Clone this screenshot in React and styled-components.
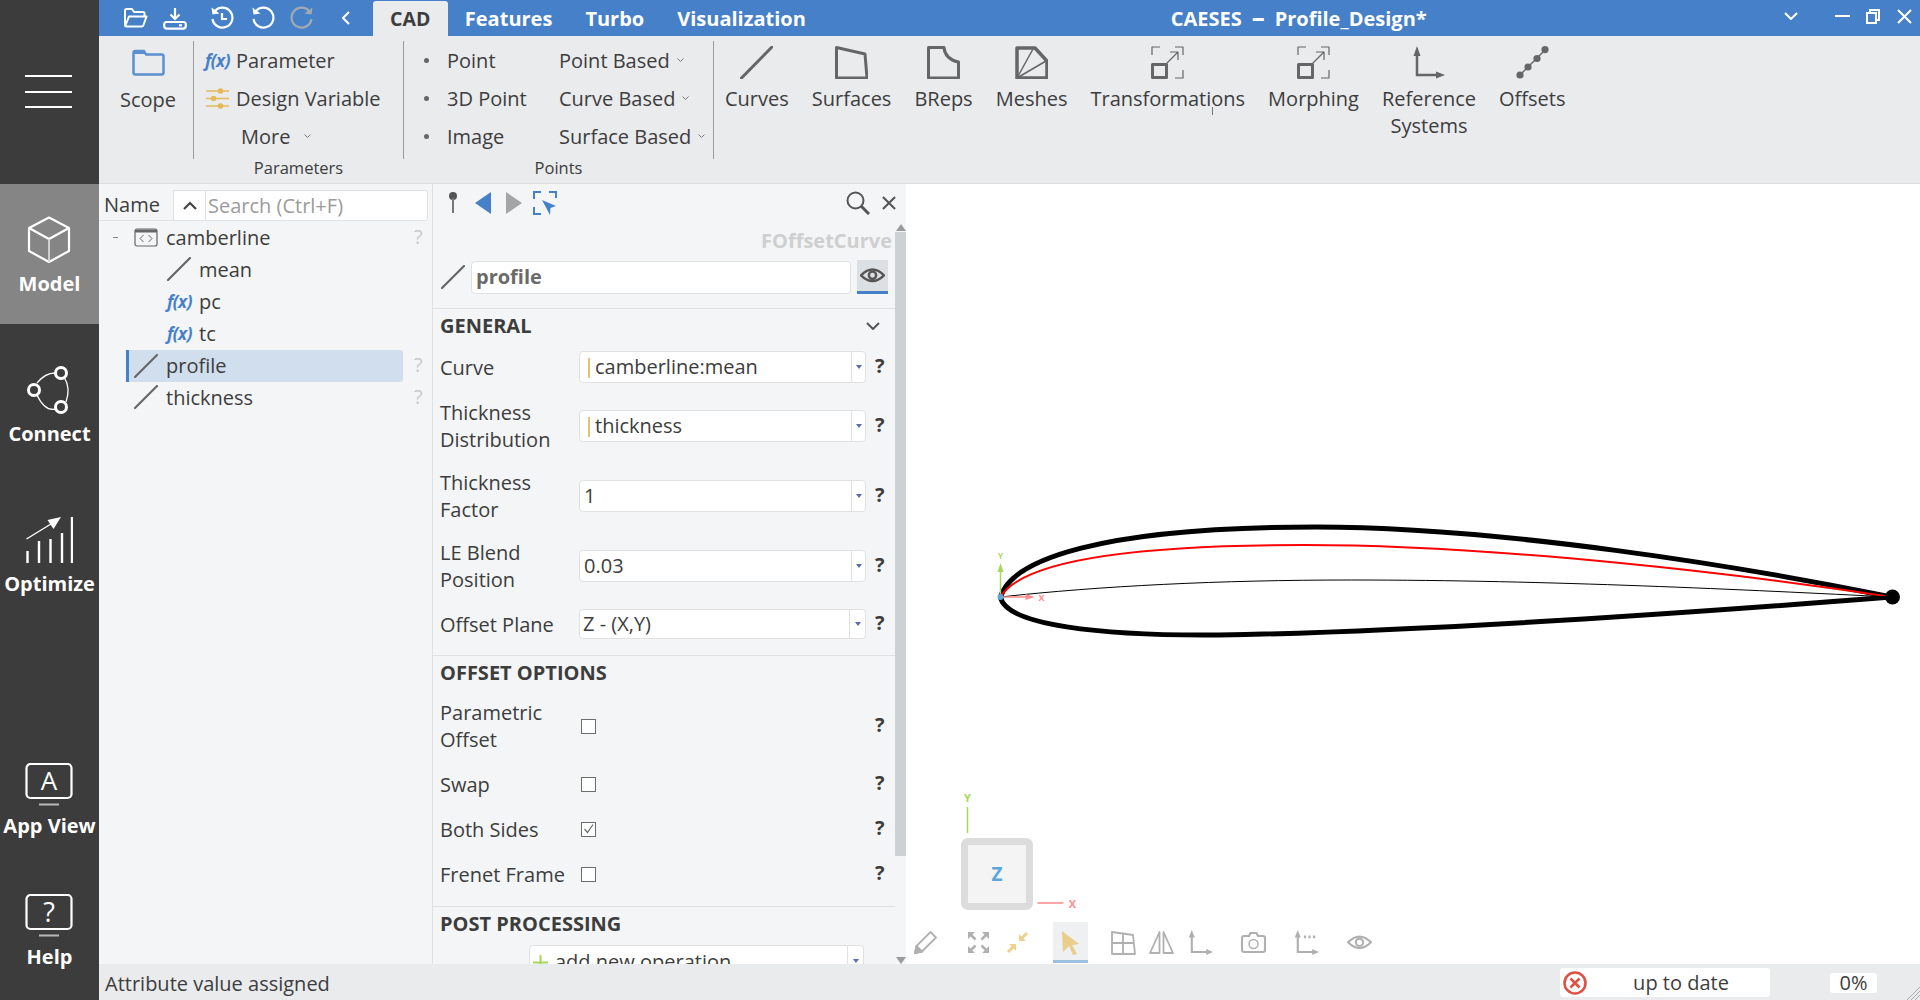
import React from "react";
import styled, { createGlobalStyle } from "styled-components";

const GlobalStyle = createGlobalStyle`
  html, body {
    margin: 0;
    height: 100%;
    overflow: hidden;
  }
  body {
    font-family: "Open Sans", "Noto Sans", sans-serif;
    font-size: 20px;
    line-height: 27px;
    color: #3d3d3d;
  }
  #root {
    height: 100%;
  }
`;

const BLUE = "#4680c8";
const ICON_GRAY = "#666666";

const Shell = styled.div`
  display: flex;
  width: 1920px;
  height: 1000px;
`;

/* ---------- left navigation ---------- */

const Sidebar = styled.nav`
  display: flex;
  flex-direction: column;
  flex: 0 0 99px;
  background: #3c3c3c;
  color: #fff;
`;

const Burger = styled.div`
  height: 184px;
  flex: 0 0 184px;
  box-sizing: border-box;
  padding: 75px 0 0 25px;
  span {
    display: block;
    width: 47px;
    height: 2px;
    margin-bottom: 13.5px;
    background: #fff;
  }
`;

const NavItem = styled.div`
  display: flex;
  flex-direction: column;
  align-items: center;
  height: ${(p) => p.$height || 140}px;
  flex: none;
  margin-bottom: ${(p) => (p.$compact ? 0 : 10)}px;
  padding-top: ${(p) => (p.$compact ? 0 : 32)}px;
  box-sizing: border-box;
  background: ${(p) => (p.$active ? "#858585" : "transparent")};
  font-size: 20px;
  font-weight: 700;
  white-space: nowrap;
`;

const NavIconBox = styled.div`
  height: ${(p) => (p.$compact ? 47 : 48)}px;
  margin-bottom: ${(p) => (p.$compact ? 2 : 6)}px;
  margin-right: 1px;
`;

const NavSpacer = styled.div`
  flex: 1;
`;

const NavBottom = styled.div`
  padding-bottom: 31px;
`;

/* ---------- main column ---------- */

const Main = styled.div`
  display: flex;
  flex-direction: column;
  flex: 1;
  min-width: 0;
`;

const TitleBar = styled.header`
  display: flex;
  align-items: stretch;
  height: 36px;
  flex: none;
  padding-left: 24px;
  background: ${BLUE};
  color: #fff;
`;

const QuickButton = styled.div`
  display: flex;
  align-items: center;
  margin-left: ${(p) => p.$gap || 0}px;
  svg {
    display: block;
  }
`;

const Tab = styled.div`
  display: flex;
  align-items: center;
  height: ${(p) => (p.$active ? 35 : 36)}px;
  margin-top: ${(p) => (p.$active ? 1 : 0)}px;
  padding: ${(p) => (p.$active ? "0 18px 0 17px" : "0 16.5px")};
  font-size: ${(p) => (p.$active ? 19.5 : 20)}px;
  font-weight: 700;
  color: ${(p) => (p.$active ? "#3d3d3d" : "#fff")};
  background: ${(p) => (p.$active ? "#e9ebed" : "transparent")};
  border-radius: 3px 3px 0 0;
`;

const WindowTitle = styled.div`
  flex: 1;
  align-self: center;
  font-weight: 700;
  text-align: center;
  white-space: pre;
  padding-right: 1px;
`;

const TitleDash = styled.span`
  display: inline-block;
  margin: 0 10px;
  font-size: 26px;
  line-height: 20px;
  vertical-align: -1px;
`;

const WindowControls = styled.div`
  display: flex;
  align-items: center;
  flex: 0 0 136px;
  padding-left: 8px;
  padding-bottom: 4px;
`;

const WindowControl = styled.div`
  display: flex;
  margin-left: ${(p) => p.$gap || 0}px;
`;

const Ribbon = styled.div`
  display: flex;
  align-items: flex-start;
  height: 148px;
  flex: none;
  padding-top: 5px;
  box-sizing: border-box;
  background: #e9ebed;
  border-bottom: 1px solid #dcdee0;
`;

const RibbonGroup = styled.div`
  display: flex;
  flex-direction: column;
  width: ${(p) => p.$width}px;
  flex: none;
`;

const GroupBody = styled.div`
  display: flex;
  height: 118px;
  box-sizing: border-box;
`;

const GroupCaption = styled.div`
  height: 18px;
  padding-left: ${(p) => p.$left || 0}px;
  font-size: 16.5px;
  line-height: 18px;
  text-align: center;
`;

const Separator = styled.div`
  flex: none;
  width: 1px;
  height: 118px;
  background: #9a9c9e;
`;

const ScopeButton = styled.div`
  display: flex;
  flex-direction: column;
  align-items: center;
  width: 94px;
  flex: none;
  box-sizing: border-box;
  padding: 8px 0 0 4px;
  svg {
    display: block;
    margin-bottom: 9.5px;
  }
`;

const CommandColumn = styled.div`
  display: flex;
  flex-direction: column;
  padding-left: ${(p) => p.$left}px;
  width: ${(p) => p.$width}px;
  box-sizing: border-box;
  flex: none;
`;

const CommandRow = styled.div`
  display: flex;
  align-items: center;
  height: 38px;
  white-space: nowrap;
  padding-left: ${(p) => p.$indent || 0}px;
`;

const CommandIcon = styled.span`
  display: flex;
  align-items: center;
  width: 31px;
  flex: none;
`;

const Bullet = styled.span`
  width: 5px;
  height: 5px;
  margin-right: 18px;
  border-radius: 50%;
  background: #666;
  flex: none;
`;

const FxMark = styled.span`
  font-size: ${(p) => p.$size || 17}px;
  font-weight: 700;
  font-style: italic;
  color: ${BLUE};
  letter-spacing: -0.5px;
  font-family: "Open Sans", sans-serif;
`;

const SmallChevron = styled.svg`
  margin-left: ${(p) => p.$gap || 8}px;
  flex: none;
`;

const BigButtons = styled.div`
  display: flex;
  gap: 23px;
  padding-left: 11px;
`;

const BigButton = styled.div`
  display: flex;
  flex-direction: column;
  align-items: center;
  position: relative;
  padding-top: 5px;
  text-align: center;
  svg {
    display: block;
    margin-bottom: 5.5px;
  }
`;

const BigLabel = styled.span`
  white-space: pre-line;
`;

const CursorTick = styled.span`
  position: absolute;
  left: 122px;
  top: 66px;
  width: 1px;
  height: 8px;
  background: #777;
`;

const Body = styled.div`
  display: flex;
  flex: 1;
  min-height: 0;
`;

/* ---------- tree ---------- */

const TreePanel = styled.aside`
  flex: 0 0 334px;
  box-sizing: border-box;
  background: #f3f5f7;
  border-right: 1px solid #dfe1e3;
`;

const TreeHeader = styled.div`
  display: flex;
  align-items: stretch;
  height: 31px;
  margin: 6px 4px 0 0;
`;

const NameHeading = styled.div`
  flex: 0 0 74px;
  box-sizing: border-box;
  padding-left: 5px;
  line-height: 29px;
  border-bottom: 1px solid #dfe1e3;
`;

const SortButton = styled.div`
  display: flex;
  align-items: center;
  justify-content: center;
  flex: 0 0 32px;
  box-sizing: border-box;
  background: #fff;
  border: 1px solid #dfe1e3;
  border-right: 0;
`;

const SearchBox = styled.div`
  flex: 1;
  box-sizing: border-box;
  padding-left: 2px;
  line-height: 29px;
  color: #9b9b9b;
  background: #fff;
  border: 1px solid #dfe1e3;
  border-radius: 0 3px 3px 0;
`;

const TreeList = styled.div`
  display: flex;
  flex-direction: column;
  padding-top: 1px;
`;

const TreeRow = styled.div`
  display: flex;
  align-items: center;
  height: 32px;
  width: 277px;
  margin-left: 27px;
  box-sizing: border-box;
  padding: 0 0 ${(p) => (p.$selected ? 1 : 2)}px ${(p) => 5 + (p.$level ? 33 : 0)}px;
  position: relative;
  border-left: 3px solid ${(p) => (p.$selected ? BLUE : "transparent")};
  border-radius: 0 3px 3px 0;
  background: ${(p) => (p.$selected ? "#d0deee" : "transparent")};
`;

const TreeIcon = styled.span`
  display: flex;
  align-items: center;
  width: 32px;
  flex: none;
`;

const TreeToggle = styled.span`
  position: absolute;
  left: -16px;
  top: 15px;
  width: 5px;
  height: 1px;
  background: #8a8a8a;
`;

const TreeHelp = styled.span`
  position: absolute;
  left: 285px;
  top: 1px;
  color: #c9c9c9;
`;

/* ---------- properties ---------- */

const PropPanel = styled.section`
  display: flex;
  flex-direction: column;
  flex: 0 0 473px;
  background: #f3f5f7;
  min-height: 0;
`;

const PropToolbar = styled.div`
  display: flex;
  align-items: center;
  height: 40px;
  flex: none;
  padding: 0 10px 3px 15px;
  box-sizing: border-box;
`;

const ToolSlot = styled.span`
  display: flex;
  margin-left: ${(p) => p.$gap || 0}px;
`;

const ToolSpacer = styled.span`
  flex: 1;
`;

const PropScroll = styled.div`
  display: flex;
  flex: 1;
  min-height: 0;
`;

const Form = styled.div`
  flex: 1;
  min-width: 0;
  overflow: hidden;
`;

const TypeLabel = styled.div`
  height: 27px;
  margin-top: 3px;
  padding-right: 3px;
  text-align: right;
  font-weight: 700;
  color: #cfcfcf;
`;

const NameRow = styled.div`
  display: flex;
  align-items: center;
  height: 34px;
  margin-top: 6px;
  padding-left: 8px;
`;

const NameInput = styled.div`
  width: 380px;
  height: 33px;
  box-sizing: border-box;
  margin: 0 6px;
  padding-left: 4px;
  line-height: 29px;
  font-weight: 700;
  color: #6a6a6a;
  background: #fff;
  border: 1px solid #dfe1e3;
  border-radius: 4px;
`;

const EyeToggle = styled.div`
  display: flex;
  align-items: center;
  justify-content: center;
  width: 31px;
  height: 34px;
  box-sizing: border-box;
  background: #dde0e3;
  border-bottom: 3px solid ${BLUE};
`;

const FormSection = styled.div`
  margin-top: ${(p) => p.$top}px;
  padding: 3px 0 ${(p) => p.$bottom}px 7px;
  border-top: 1px solid #dfe1e3;
`;

const SectionHead = styled.div`
  display: flex;
  align-items: center;
  justify-content: space-between;
  height: 27px;
  padding-right: 15px;
  font-weight: 700;
`;

const RowList = styled.div`
  display: flex;
  flex-direction: column;
  gap: ${(p) => p.$gap}px;
  margin-top: ${(p) => p.$top}px;
`;

const FieldRow = styled.div`
  display: grid;
  grid-template-columns: 139px 287px 1fr;
  align-items: center;
`;

const FieldLabel = styled.div`
  white-space: pre-line;
`;

const FieldBox = styled.div`
  display: flex;
  width: ${(p) => p.$width || 287}px;
  height: ${(p) => p.$height || 32}px;
  margin-left: ${(p) => p.$left || 0}px;
  flex: none;
  box-sizing: border-box;
  background: #fff;
  border: 1px solid #dfe1e3;
  border-radius: 4px;
`;

const FieldValue = styled.div`
  flex: 1;
  padding-left: ${(p) => p.$pad}px;
  line-height: ${(p) => p.$line || 30}px;
  white-space: nowrap;
  ${(p) =>
    p.$formula &&
    `
    position: relative;
    &::before {
      content: "";
      position: absolute;
      left: 8px;
      top: 6px;
      width: 1.5px;
      height: 20px;
      background: #e6c173;
    }
  `}
`;

const FieldDrop = styled.div`
  display: flex;
  align-items: center;
  justify-content: center;
  width: ${(p) => p.$width || 13}px;
  flex: none;
  border-left: 1px solid #dfe1e3;
`;

const Caret = styled.span`
  width: 0;
  height: 0;
  border-left: 3.5px solid transparent;
  border-right: 3.5px solid transparent;
  border-top: 4px solid #5c6bb0;
`;

const HelpMark = styled.div`
  padding-left: 9px;
  margin-bottom: 3px;
  font-weight: 700;
  line-height: 24px;
`;

const CheckBox = styled.div`
  display: flex;
  align-items: center;
  justify-content: center;
  width: 15px;
  height: 15px;
  margin-left: 2px;
  box-sizing: border-box;
  background: #fff;
  border: 1.5px solid #6c6c6c;
  svg {
    display: block;
  }
`;

const AddOperation = styled.div`
  display: flex;
  align-items: center;
`;

const AddLabel = styled.div`
  flex: 1;
  display: flex;
  align-items: center;
  line-height: 30px;
  padding: 2px 0 0 3px;
  svg {
    margin-right: 7px;
  }
`;

const ScrollBar = styled.div`
  display: flex;
  flex-direction: column;
  align-items: center;
  flex: 0 0 11px;
`;

const ScrollArrow = styled.span`
  width: 0;
  height: 0;
  margin-top: ${(p) => (p.$up ? 0 : "auto")};
  border-left: 5px solid transparent;
  border-right: 5px solid transparent;
  ${(p) => (p.$up ? "border-bottom" : "border-top")}: 7px solid #9b9b9b;
`;

const ScrollThumb = styled.div`
  align-self: stretch;
  height: 624px;
  margin-top: 1px;
  background: #ccd1d6;
`;

/* ---------- 3d viewport ---------- */

const Viewport = styled.div`
  position: relative;
  flex: 1;
  min-width: 0;
  background: #fff;
  overflow: hidden;
`;

const SceneSvg = styled.svg`
  position: absolute;
  inset: 0;
  width: 100%;
  height: 100%;
`;

const ViewCube = styled.div`
  position: absolute;
  left: 55px;
  top: 654px;
  display: flex;
  align-items: center;
  justify-content: center;
  width: 72px;
  height: 72px;
  box-sizing: border-box;
  border: 7px solid #dcdcdc;
  border-radius: 7px;
  background: #f4f4f4;
  color: #5ba7d9;
  font-weight: 700;
  font-size: 19px;
`;

const ViewTools = styled.div`
  position: absolute;
  left: 2px;
  bottom: 1px;
  display: flex;
`;

const ViewTool = styled.div`
  display: flex;
  align-items: center;
  justify-content: center;
  width: 35px;
  height: 41px;
  box-sizing: border-box;
  padding-top: 2px;
  margin-left: ${(p) => (p.$near ? 3.5 : p.$first ? 0 : 18)}px;
  background: ${(p) => (p.$active ? "#eef0f1" : "transparent")};
  border-bottom: 3px solid ${(p) => (p.$active ? "#9cbfe2" : "transparent")};
`;

/* ---------- status ---------- */

const StatusBar = styled.footer`
  display: flex;
  align-items: center;
  position: relative;
  height: 36px;
  flex: none;
  padding-left: 6px;
  background: #e9ebed;
`;

const StatusMessage = styled.div`
  flex: 1;
  padding-top: 2px;
`;

const StateBox = styled.div`
  display: flex;
  align-items: center;
  width: 210px;
  height: 29px;
  margin-top: 1px;
  box-sizing: border-box;
  padding-left: 3px;
  background: #fff;
  border-radius: 3px;
  svg {
    flex: none;
  }
`;

const StateText = styled.div`
  flex: 1;
  text-align: center;
  padding-left: 5px;
  line-height: 27px;
`;

const ProgressBox = styled.div`
  width: 47px;
  height: 20px;
  margin: 1px 43px 0 60px;
  line-height: 20px;
  text-align: center;
  background: #fff;
  border-radius: 3px;
`;

const ResizeGrip = styled.svg`
  position: absolute;
  right: 0;
  bottom: 0;
`;

/* ---------- icons ---------- */

const LineIcon = ({ size = 24 }) => (
  <svg width={size} height={size} viewBox="0 0 24 24">
    <path d="M1 23 23 1" stroke={ICON_GRAY} strokeWidth="2.2" strokeLinecap="round" fill="none" />
  </svg>
);

const CloseIcon = ({ size = 15, color = "#fff", stroke = 2 }) => (
  <svg width={size} height={size} viewBox="0 0 15 15" fill="none" stroke={color} strokeWidth={stroke}>
    <path d="M1 1 14 14M14 1 1 14" />
  </svg>
);

const FolderOpenIcon = () => (
  <svg width="25" height="22" viewBox="0 0 25 22" fill="none" stroke="#fff" strokeWidth="2" strokeLinejoin="round">
    <path d="M2 18V3.500Q2 2 3.500 2H9l2 3h9q1.500 0 1.500 1.500V9" />
    <path d="M2 19.500 6 9.500H23.500L20.500 18q-.5 1.500-2 1.500H3.500Q2 19.500 2 18" />
  </svg>
);

const SaveIcon = () => (
  <svg width="24" height="23" viewBox="0 0 24 23" fill="none" stroke="#fff" strokeWidth="2.2">
    <path d="M12 1V11M7.500 7.500 12 12 16.500 7.500" />
    <rect x="1.200" y="15" width="21.600" height="6.600" rx="2.500" />
    <path d="M16 18.300h3" />
  </svg>
);

const HistoryIcon = () => (
  <svg width="24" height="24" viewBox="0 0 24 24" fill="none" stroke="#fff" strokeWidth="2.2">
    <path d="M4.500 5.500A10 10 0 1 1 2.500 13" />
    <path d="M1.500 1.500 2.500 8.500 9.500 7.500Z" fill="#fff" stroke="none" />
    <path d="M12 7V13H17" />
  </svg>
);

const UndoIcon = ({ color = "#fff", flip }) => (
  <svg width="24" height="24" viewBox="0 0 24 24" fill="none" stroke={color} strokeWidth="2.2">
    <g transform={flip ? "matrix(-1 0 0 1 24 0)" : undefined}>
      <path d="M4.500 5.500A10 10 0 1 1 2.500 13" />
      <path d="M1.500 1.500 2.500 8.500 9.500 7.500Z" fill={color} stroke="none" />
    </g>
  </svg>
);

const ChevronIcon = ({ width = 14, height = 8, color = "#fff", stroke = 2 }) => (
  <svg width={width} height={height} viewBox="0 0 14 8" preserveAspectRatio="none" fill="none" stroke={color} strokeWidth={stroke}>
    <path d="M1 1 7 7 13 1" />
  </svg>
);

const ScopeIcon = () => (
  <svg width="33" height="27" viewBox="0 0 33 27" fill="none" stroke="#5b8fd0" strokeWidth="2.500" strokeLinejoin="round">
    <path d="M1.500 4V23.500Q1.500 25.500 3.500 25.500H29.500Q31.500 25.500 31.500 23.500V7.500Q31.500 5.500 29.500 5.500H14L12 2H3.500Q1.500 2 1.500 4Z" />
    <path d="M2 2.500H12L13.500 5H2Z" fill="#5b8fd0" stroke="none" />
  </svg>
);

const SliderIcon = () => (
  <svg width="25" height="25" viewBox="0 0 25 25" stroke="#e5b95a" strokeWidth="1.500" fill="#e5b95a">
    <path d="M1 5H24M1 12.500H24M1 20H24" fill="none" />
    <circle cx="15.500" cy="5" r="2.800" stroke="none" />
    <circle cx="8.500" cy="12.500" r="2.800" stroke="none" />
    <circle cx="15.500" cy="20" r="2.800" stroke="none" />
  </svg>
);

const BigIcon = ({ children }) => (
  <svg width="33" height="33" viewBox="0 0 33 33" fill="none" stroke={ICON_GRAY} strokeLinejoin="round">
    {children}
  </svg>
);

const TransformGlyph = () => (
  <BigIcon>
    <path d="M1 9V1H9M24 1H32V9M32 24V32H24" strokeWidth="1.200" />
    <rect x="1.500" y="18.500" width="14" height="13" strokeWidth="3" />
    <path d="M15 18 27 6M19 6H27V14" strokeWidth="1.200" />
  </BigIcon>
);

const AxesGlyph = ({ color = ICON_GRAY, dots }) => (
  <svg width="33" height="33" viewBox="0 0 33 33" fill="none" stroke={color}>
    <path d="M5 6V29H26" strokeWidth="2.500" />
    <path d="M5 0 1.500 10H8.500ZM33 29 24 25.500V32.500Z" fill={color} stroke="none" />
    {dots && <path d="M13 8h3M18 8h3M23 8h3" strokeWidth="3" />}
  </svg>
);

const ribbonIcons = {
  Curves: (
    <BigIcon>
      <path d="M1.500 32 32 1" strokeWidth="3" strokeLinecap="round" />
    </BigIcon>
  ),
  Surfaces: (
    <BigIcon>
      <path d="M1.500 1.500 30 8 32 32H1.500Z" strokeWidth="3" />
    </BigIcon>
  ),
  BReps: (
    <BigIcon>
      <path d="M1.500 1.500H17Q18 13 31.500 16V32H1.500Z" strokeWidth="3" />
    </BigIcon>
  ),
  Meshes: (
    <BigIcon>
      <path d="M2 2H20L32 15V32H2Z" strokeWidth="3.500" />
      <path d="M2 32 18 3M2 32 31 15" strokeWidth="1.500" />
    </BigIcon>
  ),
  Transformations: <TransformGlyph />,
  Morphing: <TransformGlyph />,
  "Reference\nSystems": <AxesGlyph />,
  Offsets: (
    <BigIcon>
      <path d="M4 29 29 4" strokeWidth="1.500" />
      <g fill={ICON_GRAY} stroke="none">
        <circle cx="4" cy="29" r="3.600" />
        <circle cx="12" cy="21" r="3.600" />
        <circle cx="21" cy="12.500" r="3.600" />
        <circle cx="29" cy="3.600" r="3.600" />
      </g>
    </BigIcon>
  ),
};

const WhiteGlyph = ({ width = 48, height = 48, children }) => (
  <svg width={width} height={height} viewBox={`0 0 ${width} ${height}`} fill="none" stroke="#fff" strokeLinejoin="round">
    {children}
  </svg>
);

const CubeIcon = () => (
  <WhiteGlyph height={48}>
    <path d="M24 1.500 44 12V35L24 46 4 35V12Z" strokeWidth="2.200" />
    <path d="M4 12 24 23 44 12" strokeWidth="2.200" />
    <path d="M24 23V46" strokeWidth="1.800" stroke="#d8d8d8" />
  </WhiteGlyph>
);

const ConnectIcon = () => (
  <WhiteGlyph>
    <path d="M39 11Q46 22 41 36M31 43Q20 46 12 29M12 17Q20 7 30 7" strokeWidth="1.300" />
    <circle cx="36" cy="7" r="5.500" strokeWidth="3" />
    <circle cx="9" cy="24" r="5.500" strokeWidth="3" />
    <circle cx="36" cy="41" r="5.500" strokeWidth="3" />
  </WhiteGlyph>
);

const OptimizeIcon = () => (
  <WhiteGlyph>
    <path d="M1.500 23 30 5.500" strokeWidth="1.400" />
    <path d="M36 1 22.500 4 28.500 13Z" fill="#fff" stroke="none" />
    <path d="M2.500 35V47M14 25V47M25.500 23V47M37 17V47M47 1V47" strokeWidth="2.400" />
  </WhiteGlyph>
);

const ScreenIcon = ({ children }) => (
  <svg width="48" height="47" viewBox="0 0 48 47" fill="none" stroke="#fff">
    <rect x="1.500" y="1" width="45" height="34" rx="4" strokeWidth="2.200" />
    <path d="M14 41.500H34" strokeWidth="2" stroke="#b8b8b8" />
    {children}
  </svg>
);

const PinIcon = () => (
  <svg width="10" height="22" viewBox="0 0 10 22">
    <circle cx="5" cy="4" r="4" fill="#555" />
    <path d="M5 6V21" stroke="#777" strokeWidth="2" />
  </svg>
);

const Triangle = ({ color, right }) => (
  <svg width="16" height="22" viewBox="0 0 16 22">
    <path d={right ? "M0 0 16 11 0 22Z" : "M16 0 0 11 16 22Z"} fill={color} />
  </svg>
);

const SelectFrameIcon = () => (
  <svg width="24" height="24" viewBox="0 0 24 24" fill="none" stroke={BLUE} strokeWidth="2">
    <path d="M1 8V1H8M16 1H23V7M1 16V23H8" />
    <path d="M9 9 23 15 17.500 17 17 24Z" fill={BLUE} stroke="none" />
  </svg>
);

const SearchIcon = () => (
  <svg width="24" height="24" viewBox="0 0 24 24" fill="none" stroke="#555">
    <circle cx="9.500" cy="9.500" r="8" strokeWidth="2" />
    <path d="M15 15 23 23" strokeWidth="3" />
  </svg>
);

const EyeIcon = ({ color = "#555", width = 25, stroke = 2.3 }) => (
  <svg width={width} height={(width * 14) / 24} viewBox="0 0 24 14" fill="none" stroke={color} strokeWidth={stroke}>
    <path d="M1 7Q12 -4 23 7 12 18 1 7Z" />
    <circle cx="12" cy="7" r="3.500" />
  </svg>
);

const ModuleIcon = () => (
  <svg width="24" height="19" viewBox="0 0 24 19" fill="none" stroke="#666">
    <rect x="1" y="1" width="22" height="17" rx="2" strokeWidth="1.200" />
    <path d="M1 3H23" strokeWidth="3" />
    <path d="M9.500 7 6 10.500 9.500 14M14.500 7 18 10.500 14.500 14" strokeWidth="1" />
  </svg>
);

const ToolSvg = ({ color = "#b0b0b0", children, fill = "none" }) => (
  <svg width="25" height="25" viewBox="0 0 25 25" fill={fill} stroke={color} strokeWidth="1.800" strokeLinejoin="round">
    {children}
  </svg>
);

function AxesGlyphSmall({ dots }) {
  return (
    <svg width="25" height="25" viewBox="0 0 33 33" fill="none" stroke="#b0b0b0">
      <path d="M5 6V29H26" strokeWidth="2.800" />
      <path d="M5 0 1 10H9ZM33 29 24 25V33Z" fill="#b0b0b0" stroke="none" />
      {dots && <path d="M13 9h3M19 9h3M25 9h3" strokeWidth="3.500" />}
    </svg>
  );
}

const viewIcons = [
  <ToolSvg>
    <path d="M2 23 3.500 16 17.500 2 23 7.500 9 21.500Z" />
    <path d="M2 23 3.500 16 9 21.500Z" fill="#b0b0b0" />
  </ToolSvg>,
  <ToolSvg>
    <path d="M2 2H9L2 9ZM23 2H16L23 9ZM2 23H9L2 16ZM23 23H16L23 16Z" fill="#b0b0b0" stroke="none" />
    <path d="M4 4 9.500 9.500M21 4 15.500 9.500M4 21 9.500 15.500M21 21 15.500 15.500" strokeWidth="2.500" />
  </ToolSvg>,
  <ToolSvg color="#efd08e">
    <path d="M22 3 15.500 9.500M3 22 9.500 15.500" strokeWidth="3" />
    <path d="M14 4V11H21ZM11 21V14H4Z" fill="#efd08e" stroke="none" />
  </ToolSvg>,
  <ToolSvg color="#e9cd8a">
    <path d="M4 1 21 14 14 15 19 24 15 25 11 16 5 22Z" fill="#e9cd8a" stroke="none" />
  </ToolSvg>,
  <ToolSvg>
    <path d="M1 2 22 5 24 24H1ZM1 13H23M12 4V24" />
  </ToolSvg>,
  <ToolSvg>
    <path d="M10.500 2V23H1ZM14.500 2V23H24Z" />
  </ToolSvg>,
  <AxesGlyphSmall />,
  <ToolSvg>
    <path d="M3 6H8L9.500 3H15.500L17 6H22Q24 6 24 8V20Q24 22 22 22H3Q1 22 1 20V8Q1 6 3 6Z" strokeWidth="2.200" />
    <circle cx="12.500" cy="14" r="4.500" strokeWidth="1.500" />
  </ToolSvg>,
  <AxesGlyphSmall dots />,
  <EyeIcon color="#b0b0b0" width={25} stroke={2} />,
];

const parameterCommands = [
  { icon: <FxMark>f(x)</FxMark>, label: "Parameter" },
  { icon: <SliderIcon />, label: "Design Variable" },
];

const pointCommands = ["Point", "3D Point", "Image"];

const basedCommands = ["Point Based", "Curve Based", "Surface Based"];

const ribbonButtons = [
  "Curves",
  "Surfaces",
  "BReps",
  "Meshes",
  "Transformations",
  "Morphing",
  "Reference\nSystems",
  "Offsets",
];

const treeItems = [
  { name: "camberline", icon: <ModuleIcon />, help: true, toggle: true },
  { name: "mean", icon: <LineIcon />, level: 1 },
  { name: "pc", icon: <FxMark>f(x)</FxMark>, level: 1 },
  { name: "tc", icon: <FxMark>f(x)</FxMark>, level: 1 },
  { name: "profile", icon: <LineIcon />, help: true, selected: true },
  { name: "thickness", icon: <LineIcon />, help: true },
];

const generalFields = [
  { label: "Curve", value: "camberline:mean", formula: true },
  { label: "Thickness\nDistribution", value: "thickness", formula: true },
  { label: "Thickness\nFactor", value: "1" },
  { label: "LE Blend\nPosition", value: "0.03" },
];

const offsetOptions = [
  { label: "Parametric\nOffset" },
  { label: "Swap" },
  { label: "Both Sides", checked: true },
  { label: "Frenet Frame" },
];

const SmallCaretIcon = ({ gap }) => (
  <SmallChevron $gap={gap} width="7" height="5" viewBox="0 0 7 5" fill="none" stroke="#777" strokeWidth="1">
    <path d="M.5 .5 3.500 3.500 6.500 .5" />
  </SmallChevron>
);

const Airfoil = () => (
  <SceneSvg viewBox="907 184 1013 780" fill="none">
    <path d="M1001 597C1006 625 1100 636 1220 635C1400 632 1650 616 1892 597" stroke="#000" strokeWidth="5" />
    <path d="M1001 597C1012 560 1100 527 1316 527C1500 527 1740 566 1892 597" stroke="#000" strokeWidth="5" />
    <path d="M1001 597C1020 565 1110 545 1304 545C1500 545 1750 575 1892 597" stroke="#f00" strokeWidth="2" />
    <path d="M1001 597C1100 586 1220 580 1352 580C1550 580 1750 590 1892 597" stroke="#000" strokeWidth="1" />
    <circle cx="1893" cy="597" r="7.500" fill="#000" />
    <path d="M1001 570V597" stroke="#a6d858" strokeWidth="1.500" />
    <path d="M1001 563 998 572H1004Z" fill="#a6d858" />
    <text x="1001" y="559" fontSize="8" fontWeight="700" textAnchor="middle" fill="#a6d858">Y</text>
    <path d="M1001 597H1028" stroke="#ff8a8a" strokeWidth="1.500" />
    <path d="M1035 597 1026 594V600Z" fill="#ff8a8a" />
    <text x="1042" y="601" fontSize="9" fontWeight="700" textAnchor="middle" fill="#ff8a8a">X</text>
    <circle cx="1001" cy="597" r="3" fill="#5ba7d9" />
    <path d="M968 807V833" stroke="#a6d858" strokeWidth="1.500" />
    <text x="968" y="802" fontSize="11" fontWeight="700" textAnchor="middle" fill="#a6d858">Y</text>
    <path d="M1038 903H1064" stroke="#ff8a8a" strokeWidth="1.500" />
    <text x="1073" y="908" fontSize="11" fontWeight="700" textAnchor="middle" fill="#ff8a8a">X</text>
  </SceneSvg>
);

const App = () => {
  return (
    <Shell>
      <GlobalStyle />
      <Sidebar>
        <Burger>
          <span />
          <span />
          <span />
        </Burger>
        <NavItem $active>
          <NavIconBox>
            <CubeIcon />
          </NavIconBox>
          Model
        </NavItem>
        <NavItem>
          <NavIconBox>
            <ConnectIcon />
          </NavIconBox>
          Connect
        </NavItem>
        <NavItem>
          <NavIconBox>
            <OptimizeIcon />
          </NavIconBox>
          Optimize
        </NavItem>
        <NavSpacer />
        <NavBottom>
          <NavItem $compact $height={131}>
            <NavIconBox $compact>
              <ScreenIcon>
                <text x="24" y="27" fontSize="26" fontWeight="400" fill="#fff" stroke="none" textAnchor="middle">A</text>
              </ScreenIcon>
            </NavIconBox>
            App View
          </NavItem>
          <NavItem $compact $height={75}>
            <NavIconBox $compact>
              <ScreenIcon>
                <text x="24" y="28" fontSize="27" fontWeight="400" fill="#fff" stroke="none" textAnchor="middle">?</text>
              </ScreenIcon>
            </NavIconBox>
            Help
          </NavItem>
        </NavBottom>
      </Sidebar>

      <Main>
        <TitleBar>
          <QuickButton>
            <FolderOpenIcon />
          </QuickButton>
          <QuickButton $gap={15}>
            <SaveIcon />
          </QuickButton>
          <QuickButton $gap={23}>
            <HistoryIcon />
          </QuickButton>
          <QuickButton $gap={17}>
            <UndoIcon />
          </QuickButton>
          <QuickButton $gap={15}>
            <UndoIcon color="#a3a9b0" flip />
          </QuickButton>
          <QuickButton $gap={28}>
            <svg width="8" height="14" viewBox="0 0 8 14" fill="none" stroke="#fff" strokeWidth="2">
              <path d="M7 1 1 7 7 13" />
            </svg>
          </QuickButton>
          <QuickButton $gap={23} />
          <Tab $active>CAD</Tab>
          <Tab>Features</Tab>
          <Tab>Turbo</Tab>
          <Tab>Visualization</Tab>
          <WindowTitle>
            CAESES
            <TitleDash>–</TitleDash>
            Profile_Design*
          </WindowTitle>
          <WindowControls>
            <ChevronIcon />
            <WindowControl $gap={37}>
              <svg width="15" height="2" viewBox="0 0 15 2">
                <path d="M0 1H15" stroke="#fff" strokeWidth="2" />
              </svg>
            </WindowControl>
            <WindowControl $gap={16}>
              <svg width="14" height="15" viewBox="0 0 14 15" fill="none" stroke="#fff" strokeWidth="2">
                <rect x="1" y="4" width="9" height="10" />
                <path d="M4 3V1H13V11H11" />
              </svg>
            </WindowControl>
            <WindowControl $gap={17}>
              <CloseIcon />
            </WindowControl>
          </WindowControls>
        </TitleBar>

        <Ribbon>
          <RibbonGroup $width={304}>
            <GroupBody>
              <ScopeButton>
                <ScopeIcon />
                Scope
              </ScopeButton>
              <Separator />
              <CommandColumn $left={11} $width={209}>
                {parameterCommands.map((c) => (
                  <CommandRow key={c.label}>
                    <CommandIcon>{c.icon}</CommandIcon>
                    {c.label}
                  </CommandRow>
                ))}
                <CommandRow $indent={36}>
                  More
                  <SmallCaretIcon gap={14} />
                </CommandRow>
              </CommandColumn>
            </GroupBody>
            <GroupCaption $left={95}>Parameters</GroupCaption>
          </RibbonGroup>
          <Separator />
          <RibbonGroup $width={309}>
            <GroupBody>
              <CommandColumn $left={20} $width={155}>
                {pointCommands.map((c) => (
                  <CommandRow key={c}>
                    <Bullet />
                    {c}
                  </CommandRow>
                ))}
              </CommandColumn>
              <CommandColumn $left={0} $width={154}>
                {basedCommands.map((c) => (
                  <CommandRow key={c}>
                    {c}
                    <SmallCaretIcon gap={7} />
                  </CommandRow>
                ))}
              </CommandColumn>
            </GroupBody>
            <GroupCaption>Points</GroupCaption>
          </RibbonGroup>
          <Separator />
          <BigButtons>
            {ribbonButtons.map((label) => (
              <BigButton key={label}>
                {ribbonIcons[label]}
                <BigLabel>{label}</BigLabel>
                {label === "Transformations" && <CursorTick />}
              </BigButton>
            ))}
          </BigButtons>
        </Ribbon>

        <Body>
          <TreePanel>
            <TreeHeader>
              <NameHeading>Name</NameHeading>
              <SortButton>
                <svg width="14" height="9" viewBox="0 0 14 9" fill="none" stroke="#444" strokeWidth="2.200">
                  <path d="M1 8 7 2 13 8" />
                </svg>
              </SortButton>
              <SearchBox>Search (Ctrl+F)</SearchBox>
            </TreeHeader>
            <TreeList>
              {treeItems.map((item) => (
                <TreeRow key={item.name} $level={item.level} $selected={item.selected}>
                  {item.toggle && <TreeToggle />}
                  <TreeIcon>{item.icon}</TreeIcon>
                  {item.name}
                  {item.help && <TreeHelp>?</TreeHelp>}
                </TreeRow>
              ))}
            </TreeList>
          </TreePanel>

          <PropPanel>
            <PropToolbar>
              <ToolSlot>
                <PinIcon />
              </ToolSlot>
              <ToolSlot $gap={17}>
                <Triangle color={BLUE} />
              </ToolSlot>
              <ToolSlot $gap={15}>
                <Triangle color="#a5a5a5" right />
              </ToolSlot>
              <ToolSlot $gap={11}>
                <SelectFrameIcon />
              </ToolSlot>
              <ToolSpacer />
              <ToolSlot>
                <SearchIcon />
              </ToolSlot>
              <ToolSlot $gap={12}>
                <CloseIcon size={14} color="#555" stroke={2.2} />
              </ToolSlot>
            </PropToolbar>
            <PropScroll>
              <Form>
                <TypeLabel>FOffsetCurve</TypeLabel>
                <NameRow>
                  <LineIcon />
                  <NameInput>profile</NameInput>
                  <EyeToggle>
                    <EyeIcon />
                  </EyeToggle>
                </NameRow>
                <FormSection $top={14} $bottom={16}>
                  <SectionHead>
                    GENERAL
                    <ChevronIcon color="#555" stroke={2} />
                  </SectionHead>
                  <RowList $top={12} $gap={16}>
                    {generalFields.map((f) => (
                      <FieldRow key={f.label}>
                        <FieldLabel>{f.label}</FieldLabel>
                        <FieldBox>
                          <FieldValue $pad={f.formula ? 15 : 4} $formula={f.formula}>
                            {f.value}
                          </FieldValue>
                          <FieldDrop>
                            <Caret />
                          </FieldDrop>
                        </FieldBox>
                        <HelpMark>?</HelpMark>
                      </FieldRow>
                    ))}
                    <FieldRow>
                      <FieldLabel>Offset Plane</FieldLabel>
                      <FieldBox $height={30}>
                        <FieldValue $pad={3} $line={28}>
                          Z - (X,Y)
                        </FieldValue>
                        <FieldDrop $width={15}>
                          <Caret />
                        </FieldDrop>
                      </FieldBox>
                      <HelpMark>?</HelpMark>
                    </FieldRow>
                  </RowList>
                </FormSection>
                <FormSection $top={0} $bottom={18}>
                  <SectionHead>OFFSET OPTIONS</SectionHead>
                  <RowList $top={13} $gap={18}>
                    {offsetOptions.map((o) => (
                      <FieldRow key={o.label}>
                        <FieldLabel>{o.label}</FieldLabel>
                        <CheckBox>
                          {o.checked && (
                            <svg width="11" height="11" viewBox="0 0 11 11" fill="none" stroke="#666" strokeWidth="1.200">
                              <path d="M1.500 5 4.500 8.500 10 .5" />
                            </svg>
                          )}
                        </CheckBox>
                        <HelpMark>?</HelpMark>
                      </FieldRow>
                    ))}
                  </RowList>
                </FormSection>
                <FormSection $top={0} $bottom={0}>
                  <SectionHead>POST PROCESSING</SectionHead>
                  <RowList $top={8} $gap={0}>
                    <AddOperation>
                      <FieldBox $left={89} $width={335}>
                        <AddLabel>
                          <svg width="15" height="15" viewBox="0 0 15 15" stroke="#a6d858" strokeWidth="2">
                            <path d="M7.500 0V15M0 7.500H15" />
                          </svg>
                          add new operation
                        </AddLabel>
                        <FieldDrop $width={15}>
                          <Caret />
                        </FieldDrop>
                      </FieldBox>
                    </AddOperation>
                  </RowList>
                </FormSection>
              </Form>
              <ScrollBar>
                <ScrollArrow $up />
                <ScrollThumb />
                <ScrollArrow />
              </ScrollBar>
            </PropScroll>
          </PropPanel>

          <Viewport>
            <Airfoil />
            <ViewCube>Z</ViewCube>
            <ViewTools>
              {viewIcons.map((icon, i) => (
                <ViewTool
                  key={i}
                  $first={i === 0}
                  $near={[2, 5, 6].includes(i)}
                  $active={i === 3}
                >
                  {icon}
                </ViewTool>
              ))}
            </ViewTools>
          </Viewport>
        </Body>

        <StatusBar>
          <StatusMessage>Attribute value assigned</StatusMessage>
          <StateBox>
            <svg width="24" height="24" viewBox="0 0 24 24" fill="none" stroke="#de5246" strokeWidth="2.600">
              <circle cx="12" cy="12" r="10.500" />
              <path d="M7.500 7.500 16.500 16.500M16.500 7.500 7.500 16.500" />
            </svg>
            <StateText>up to date</StateText>
          </StateBox>
          <ProgressBox>0%</ProgressBox>
          <ResizeGrip width="13" height="13" viewBox="0 0 13 13" stroke="#a8a8a8" strokeWidth="1">
            <path d="M0 13 13 0M4 13 13 4M8 13 13 8" />
          </ResizeGrip>
        </StatusBar>
      </Main>
    </Shell>
  );
};

export default App;
